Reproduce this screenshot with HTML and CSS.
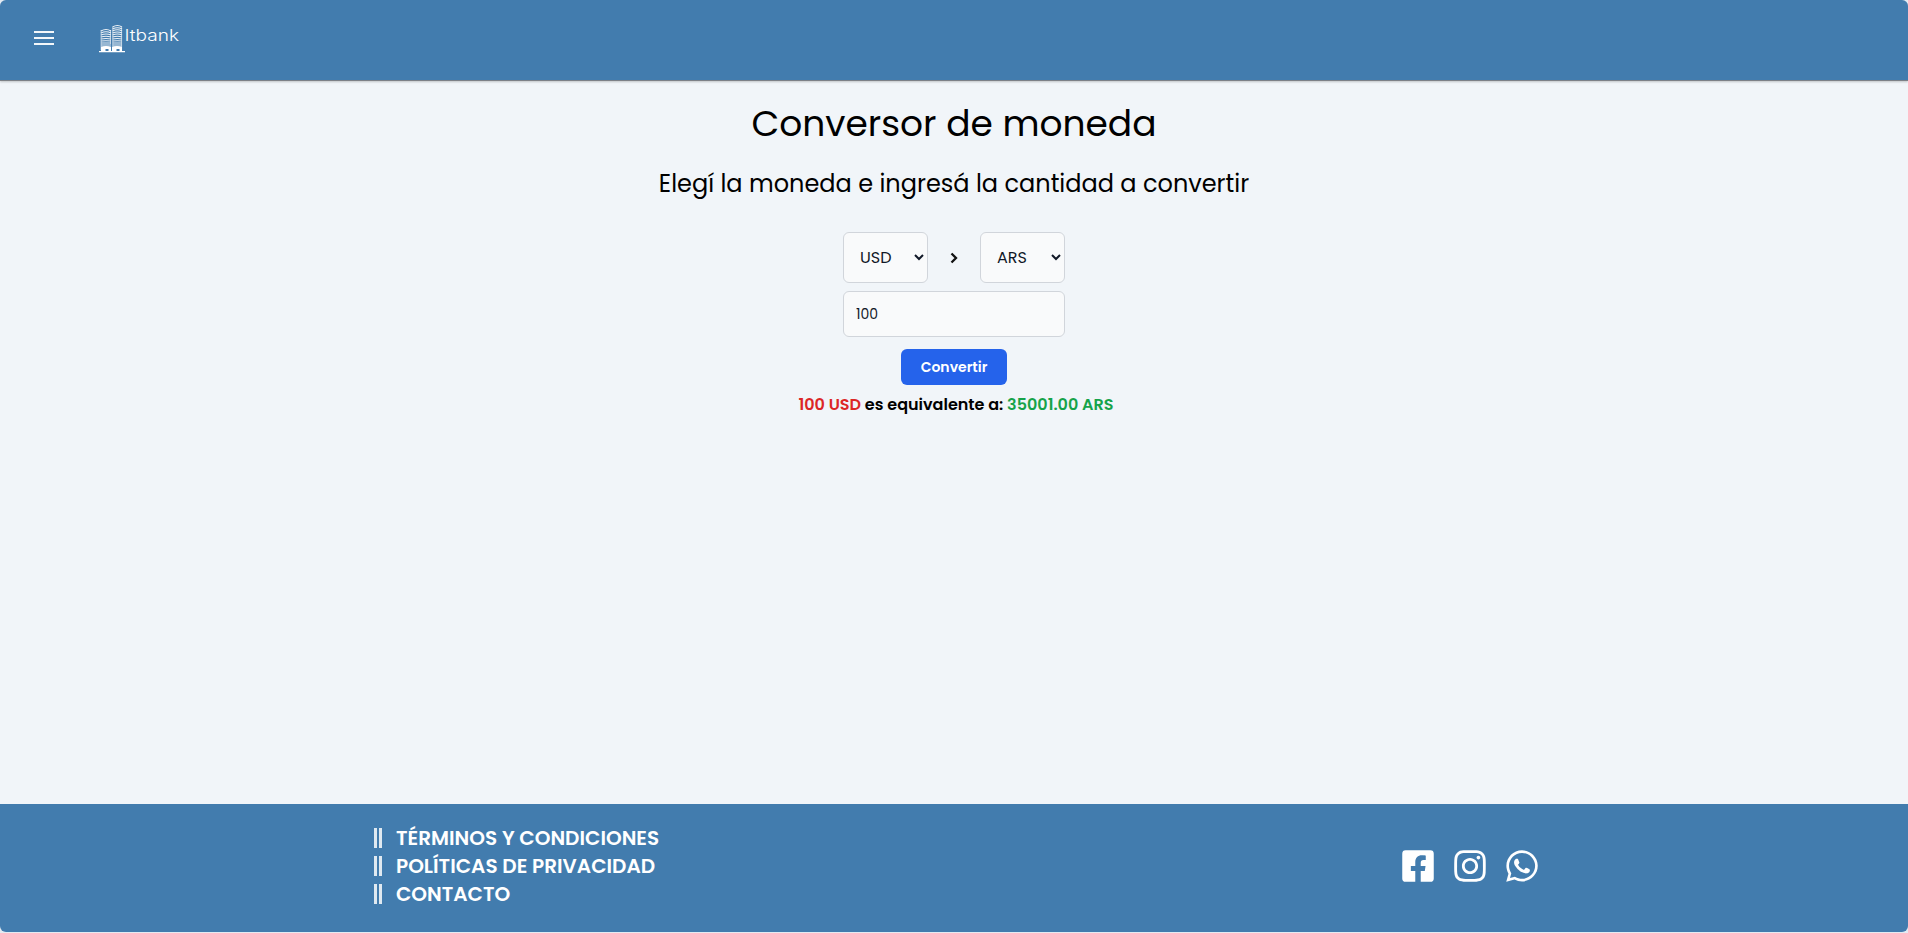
FILE: index.html
```html
<!DOCTYPE html>
<html lang="es">
<head>
<meta charset="utf-8">
<title>Itbank</title>
<link rel="stylesheet" href="styles.css">
</head>
<body>
<div class="page">
  <header class="header">
    <button class="menu" aria-label="Menú"><span></span><span></span><span></span></button>
    <svg class="logo" width="84" height="32" viewBox="0 0 84 32">
      <g fill="none" stroke="#fff" stroke-width="1.100" opacity=".9">
        <path d="M2 8q5-3 10 0M2 10q5-2.500 10 0M2 12q5-2 10 0M2 14q5-1.500 10 0M2 16q5-1 10 0M2 18q5-.5 10 0M2 20h10M2 22h9M2 24h9"/>
        <path d="M13.500 4q5-3 9.500 0M13.500 6q5-2.500 9.500 0M13.500 8q5-2.500 9.500 0M13.500 10q5-2 9.500 0M13.500 12q5-2 9.500 0M13.500 14q5-1.500 9.500 0M13.500 16q5-1 9.500 0M13.500 18q5-.5 9.500 0M13.500 20H23M13.500 22H23M13.500 24H23"/>
      </g>
      <path d="M2 7v20M11.500 7v20M13.800 4v23M22.600 4v23" stroke="#fff" stroke-width=".7" opacity=".7"/>
      <path d="M0 28h26v1.200H0zM2 28v-4q5-2 10 0v4h-2.500v-2h-3v2zM13 28v-4q5-2 10 0v4h-2.500v-2h-3v2z" fill="#fff"/>
      <text class="logo-text" x="25.500" y="17.500" textLength="54.500" lengthAdjust="spacingAndGlyphs">Itbank</text>
    </svg>
  </header>
  <main class="main">
    <h1 class="title">Conversor de moneda</h1>
    <h2 class="subtitle">Elegí la moneda e ingresá la cantidad a convertir</h2>
    <form class="form">
      <div class="currencies">
        <select class="select"><option>USD</option><option>ARS</option></select>
        <svg class="chevron" width="8" height="12" viewBox="0 0 8 12"><path d="M1.500 1.500L6 6 1.500 10.500" fill="none" stroke="#111" stroke-width="2.300"/></svg>
        <select class="select"><option>ARS</option><option>USD</option></select>
      </div>
      <input class="amount" type="text" value="100">
      <button class="convert" type="button">Convertir</button>
    </form>
    <p class="result"><span class="from">100 USD</span> es equivalente a: <span class="to">35001.00 ARS</span></p>
  </main>
  <footer class="footer">
    <ul class="links">
      <li><i class="bars"></i><a>TÉRMINOS Y CONDICIONES</a></li>
      <li><i class="bars"></i><a>POLÍTICAS DE PRIVACIDAD</a></li>
      <li><i class="bars"></i><a>CONTACTO</a></li>
    </ul>
    <div class="social">
      <svg viewBox="0 0 448 512"><path d="M400 32H48A48 48 0 0 0 0 80v352a48 48 0 0 0 48 48h137.250V327.690h-63V256h63v-54.640c0-62.150 37-96.480 93.670-96.480 27.140 0 55.520 4.840 55.520 4.840v61h-31.270c-30.810 0-40.420 19.120-40.420 38.730V256h68.780l-11 71.690h-57.780V480H400a48 48 0 0 0 48-48V80a48 48 0 0 0-48-48z"/></svg>
      <svg viewBox="0 0 448 512"><path d="M224.100 141c-63.600 0-114.900 51.300-114.900 114.900s51.300 114.900 114.900 114.900S339 319.500 339 255.900 287.700 141 224.100 141zm0 189.600c-41.100 0-74.700-33.500-74.700-74.700s33.500-74.700 74.700-74.700 74.700 33.500 74.700 74.700-33.600 74.700-74.700 74.700zm146.400-194.300c0 14.900-12 26.800-26.800 26.800-14.900 0-26.800-12-26.800-26.800s12-26.800 26.800-26.800 26.800 12 26.800 26.800zm76.100 27.200c-1.700-35.900-9.900-67.700-36.200-93.900-26.200-26.200-58-34.400-93.900-36.200-37-2.100-147.900-2.100-184.900 0-35.800 1.700-67.600 9.900-93.900 36.100s-34.400 58-36.200 93.900c-2.100 37-2.100 147.900 0 184.900 1.700 35.900 9.900 67.700 36.200 93.900s58 34.400 93.900 36.200c37 2.100 147.900 2.100 184.900 0 35.900-1.700 67.700-9.900 93.900-36.200 26.200-26.200 34.400-58 36.200-93.900 2.100-37 2.100-147.800 0-184.800zM398.800 388c-7.800 19.600-22.900 34.700-42.600 42.600-29.500 11.700-99.500 9-132.100 9s-102.700 2.600-132.100-9c-19.600-7.800-34.700-22.900-42.600-42.600-11.700-29.500-9-99.500-9-132.100s-2.600-102.700 9-132.100c7.800-19.600 22.900-34.700 42.600-42.600 29.500-11.700 99.500-9 132.100-9s102.700-2.600 132.100 9c19.600 7.800 34.700 22.900 42.600 42.600 11.700 29.500 9 99.500 9 132.100s2.700 102.700-9 132.100z"/></svg>
      <svg viewBox="0 0 448 512"><path d="M380.900 97.100C339 55.100 283.200 32 223.900 32c-122.400 0-222 99.600-222 222 0 39.100 10.200 77.300 29.600 111L0 480l117.700-30.900c32.400 17.700 68.900 27 106.100 27h.1c122.300 0 224.100-99.600 224.100-222 0-59.300-25.200-115-67.100-157zm-157 341.600c-33.200 0-65.700-8.900-94-25.700l-6.700-4-69.800 18.300L72 359.200l-4.400-7c-18.500-29.400-28.200-63.300-28.200-98.200 0-101.700 82.800-184.500 184.600-184.500 49.300 0 95.600 19.200 130.400 54.100 34.800 34.900 56.200 81.200 56.100 130.500 0 101.800-84.900 184.600-186.600 184.600zm101.200-138.200c-5.500-2.800-32.800-16.200-37.900-18-5.100-1.900-8.800-2.800-12.500 2.800-3.700 5.600-14.300 18-17.600 21.800-3.200 3.700-6.500 4.200-12 1.400-32.600-16.300-54-29.100-75.500-66-5.700-9.800 5.700-9.100 16.300-30.300 1.800-3.700.9-6.900-.5-9.700-1.400-2.800-12.500-30.100-17.100-41.200-4.500-10.800-9.100-9.300-12.500-9.500-3.200-.2-6.900-.2-10.600-.2-3.700 0-9.700 1.400-14.800 6.900-5.100 5.600-19.400 19-19.400 46.300 0 27.300 19.900 53.700 22.600 57.400 2.800 3.700 39.100 59.700 94.800 83.800 35.200 15.200 49 16.500 66.600 13.900 10.700-1.600 32.800-13.400 37.400-26.400 4.600-13 4.600-24.100 3.200-26.400-1.300-2.500-5-3.900-10.500-6.600z"/></svg>
    </div>
  </footer>
</div>
</body>
</html>
```
FILE: styles.css
```css
* { box-sizing: border-box; margin: 0; padding: 0; }
html { background: #e4ebf2; }
body {
  height: 933px;
  font-family: Poppins, Inter, sans-serif;
  color: #000;
}
.page {
  display: flex;
  flex-direction: column;
  height: 932px;
  border-radius: 6px;
  overflow: hidden;
  background: #f1f5f9;
}
.header {
  display: flex;
  align-items: flex-start;
  height: 81px;
  padding: 22px 34px;
  background: #427cae;
  border-bottom: 1px solid #7d8187;
  box-shadow: 0 1px 2px rgba(0, 0, 0, .2);
}
.menu {
  display: flex;
  flex-direction: column;
  gap: 4px;
  width: 20px;
  margin-top: 9px;
  border: 0;
  background: none;
}
.menu span { height: 2px; background: #f3f7fa; }
.logo { margin: 1px 0 0 45px; }
.logo-text { font: 300 15.500px Inter, sans-serif; fill: #fff; }
.main {
  display: flex;
  flex: 1;
  flex-direction: column;
  align-items: center;
  white-space: nowrap;
}
.title { margin-top: 23px; font-size: 36px; font-weight: 400; line-height: 40px; }
.subtitle { margin-top: 24px; font-size: 24px; font-weight: 400; line-height: 32px; }
.form { display: flex; flex-direction: column; align-items: center; width: 222px; margin-top: 32px; }
.currencies { display: flex; align-items: center; justify-content: space-between; width: 100%; }
.select {
  width: 85px;
  height: 51px;
  padding: 0 0 0 12px;
  border: 1px solid #d1d5db;
  border-radius: 6px;
  background: #f9fafb;
  color: #111827;
  font: 400 16px Poppins, Inter, sans-serif;
}
.amount {
  width: 100%;
  height: 46px;
  margin-top: 8px;
  padding: 0 12px;
  border: 1px solid #d1d5db;
  border-radius: 6px;
  background: #f9fafb;
  color: #111827;
  font: 400 14px Poppins, Inter, sans-serif;
}
.convert {
  width: 106px;
  height: 36px;
  margin-top: 12px;
  border: 0;
  border-radius: 6px;
  background: #2563eb;
  color: #fff;
  font: 600 14px Poppins, Inter, sans-serif;
}
.result { margin: 8px 0 0 4px; font-size: 16px; font-weight: 600; line-height: 24px; }
.from { color: #dc2626; }
.to { color: #16a34a; }
.footer {
  display: flex;
  justify-content: space-between;
  height: 128px;
  padding: 20px 370px 0 374px;
  background: #427cae;
  color: #fff;
}
.links { list-style: none; font-size: 20px; font-weight: 600; line-height: 28px; white-space: nowrap; }
.links li { display: flex; align-items: center; }
.bars { width: 8px; height: 20px; margin-right: 14px; border: solid #dfe9f1; border-width: 0 3px; }
.social { display: flex; gap: 20px; height: 36px; margin-top: 24px; }
.social svg { width: 32px; height: 36px; fill: #fff; }
```
